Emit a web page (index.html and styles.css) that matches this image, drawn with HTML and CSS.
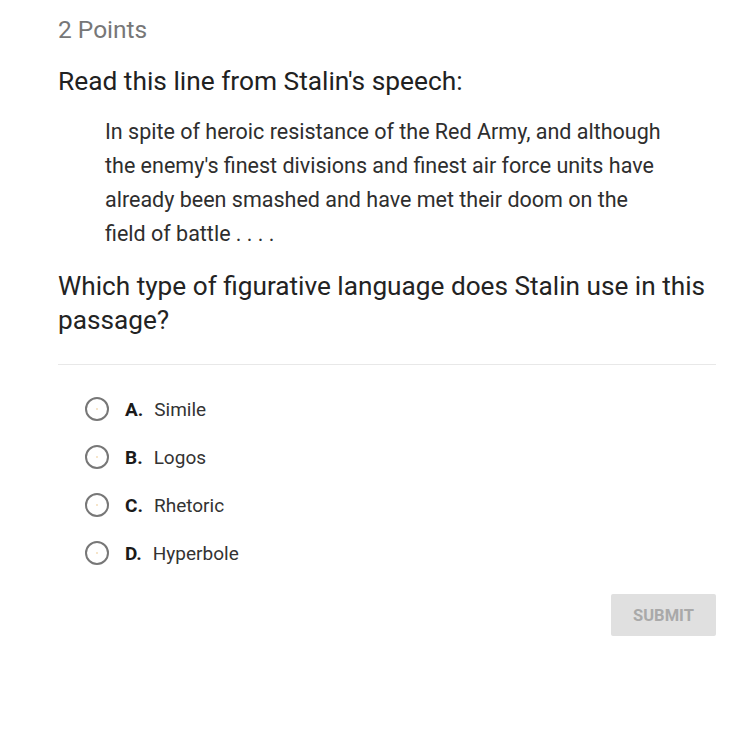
FILE: index.html
```html
<!DOCTYPE html>
<html lang="en">

<head>
    <meta charset="UTF-8">
    <meta name="viewport" content="width=device-width, initial-scale=1.0">
    <title>Question</title>
    <link rel="stylesheet" href="styles.css">
</head>

<body>
    <div class="question">
        <div class="points">2 Points</div>

        <p class="prompt">Read this line from Stalin's speech:</p>

        <blockquote class="quote">
            In spite of heroic resistance of the Red Army, and although
            the enemy's finest divisions and finest air force units have
            already been smashed and have met their doom on the
            field of battle . . . .
        </blockquote>

        <p class="ask">Which type of figurative language does Stalin use in this passage?</p>

        <hr class="divider">

        <div class="options">
            <label class="option">
                <span class="radio"></span>
                <span class="letter">A.</span>
                <span class="answer">Simile</span>
            </label>
            <label class="option">
                <span class="radio"></span>
                <span class="letter">B.</span>
                <span class="answer">Logos</span>
            </label>
            <label class="option">
                <span class="radio"></span>
                <span class="letter">C.</span>
                <span class="answer">Rhetoric</span>
            </label>
            <label class="option">
                <span class="radio"></span>
                <span class="letter">D.</span>
                <span class="answer">Hyperbole</span>
            </label>
        </div>

        <div class="actions">
            <button class="submit" disabled>SUBMIT</button>
        </div>
    </div>
</body>

</html>
```

FILE: styles.css
```css
body {
    margin: 0;
    background-color: #fff;
    font-family: Roboto, "Liberation Sans", sans-serif;
    color: #212121;
}

.question {
    padding: 15px 34px 0 58px;
}

.points {
    font-size: 24.5px;
    line-height: 30px;
    color: #777;
}

.prompt {
    margin: 21px 0 0;
    font-size: 26.3px;
    line-height: 30px;
}

.quote {
    width: 563px;
    margin: 19px 0 0 47px;
    font-size: 21.5px;
    line-height: 34px;
    color: #2e2e2e;
}

.ask {
    margin: 18px 0 0;
    font-size: 26.2px;
    line-height: 34px;
    color: #232323;
}

.divider {
    margin: 27px 0 0;
    border: none;
    border-top: 1px solid #e8e8e8;
}

.options {
    margin: 20px 0 0 27px;
}

.option {
    display: flex;
    align-items: center;
    height: 48px;
}

.radio {
    position: relative;
    width: 20px;
    height: 20px;
    border: 2px solid #777;
    border-radius: 50%;
    margin-right: 16px;
}

.radio::after {
    content: "";
    position: absolute;
    left: 9px;
    top: 9px;
    width: 2px;
    height: 2px;
    border-radius: 50%;
    background-color: #f3dcb8;
}

.letter {
    font-weight: bold;
    font-size: 19px;
    margin-right: 11px;
    color: #1a1a1a;
}

.answer {
    font-size: 19px;
    color: #333;
}

.actions {
    display: flex;
    justify-content: flex-end;
    margin-top: 17px;
}

.submit {
    width: 105px;
    height: 42px;
    border: none;
    border-radius: 2px;
    background-color: #e0e0e0;
    color: #a9a9a9;
    font-family: inherit;
    font-size: 16.5px;
    font-weight: bold;
}
```
